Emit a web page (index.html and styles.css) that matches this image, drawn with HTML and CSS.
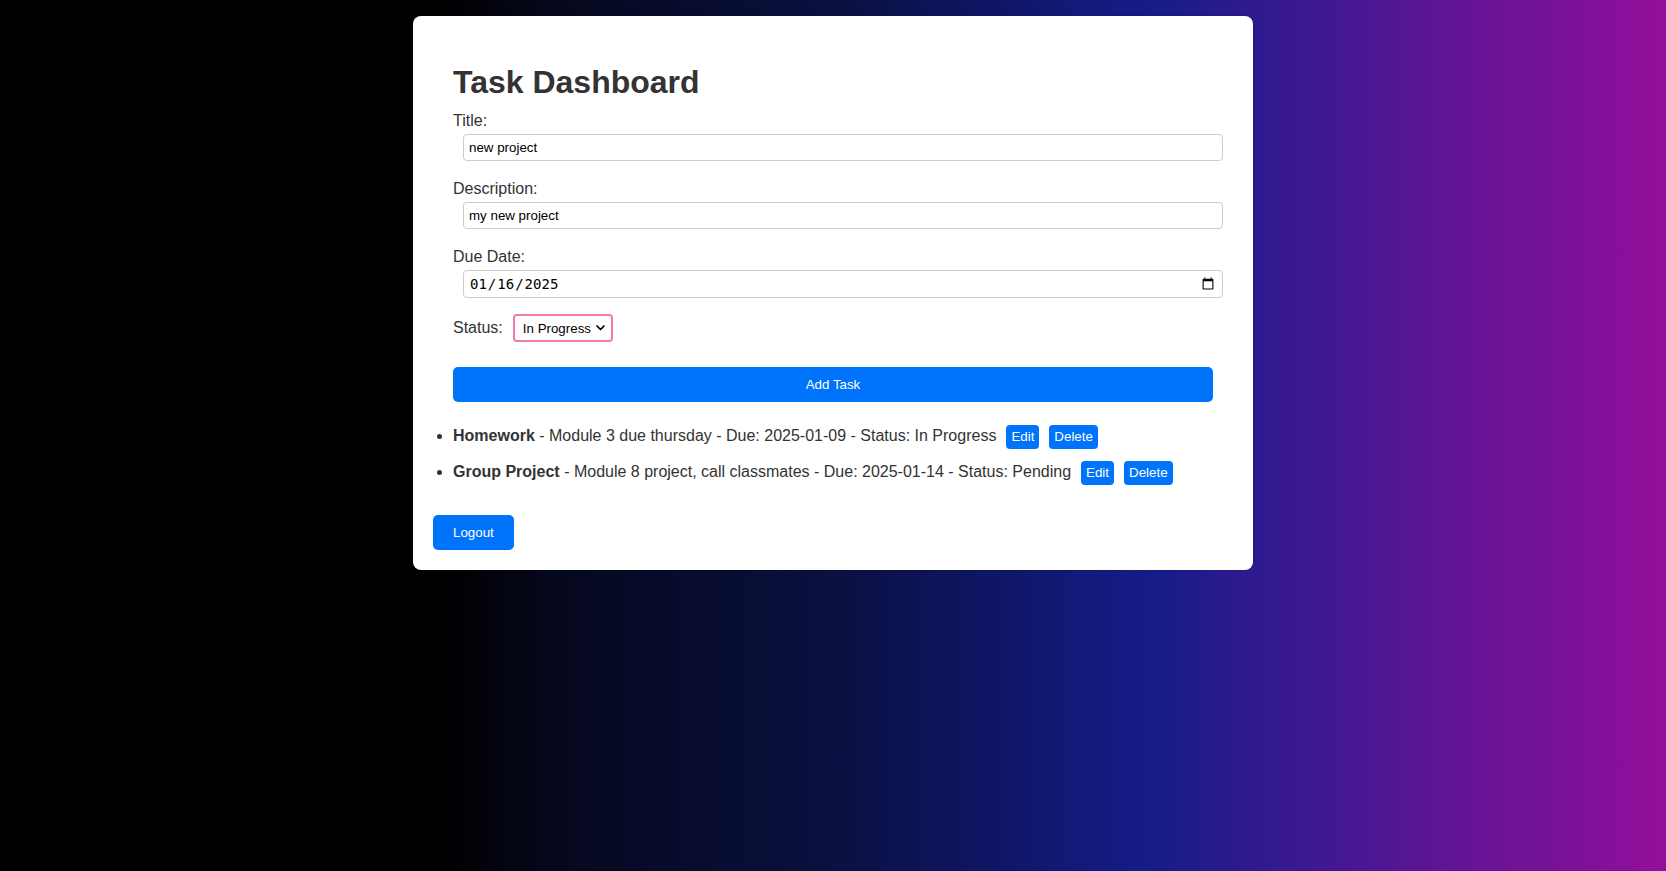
FILE: index.html
```html
<!DOCTYPE html>
<html lang="en">
<head>
<meta charset="utf-8">
<title>Task Dashboard</title>
<link rel="stylesheet" href="styles.css">
</head>
<body>
<div class="card">
  <form class="task-form">
    <h1 class="title">Task Dashboard</h1>
    <div class="field">
      <label class="label" for="t">Title:</label>
      <input class="input" id="t" type="text" value="new project">
    </div>
    <div class="field">
      <label class="label" for="d">Description:</label>
      <input class="input" id="d" type="text" value="my new project">
    </div>
    <div class="field">
      <label class="label" for="due">Due Date:</label>
      <input class="input input-date" id="due" type="date" value="2025-01-16">
    </div>
    <div class="status-row">
      <label class="label" for="s">Status:</label>
      <span class="select-wrap">
        <select class="select" id="s">
          <option>Pending</option>
          <option selected>In Progress</option>
          <option>Completed</option>
        </select>
        <svg class="chevron" width="9" height="6" viewBox="0 0 9 6"><path d="M1 1 L4.5 4.5 L8 1" fill="none" stroke="#000" stroke-width="1.7" stroke-linecap="round" stroke-linejoin="round"/></svg>
      </span>
    </div>
    <button class="btn btn-add" type="button">Add Task</button>
  </form>
  <ul class="task-list">
    <li class="task"><span><strong>Homework</strong> - Module 3 due thursday - Due: 2025-01-09 - Status: In Progress</span><button class="btn-sm" type="button">Edit</button><button class="btn-sm" type="button">Delete</button></li>
    <li class="task"><span><strong>Group Project</strong> - Module 8 project, call classmates - Due: 2025-01-14 - Status: Pending</span><button class="btn-sm" type="button">Edit</button><button class="btn-sm" type="button">Delete</button></li>
  </ul>
  <button class="btn btn-logout" type="button">Logout</button>
</div>
</body>
</html>
```

FILE: styles.css
```css
html, body {
  margin: 0;
  padding: 0;
}
body {
  min-height: 100vh;
  font-family: "Liberation Sans", Arial, sans-serif;
  color: #333;
  background: linear-gradient(90deg, #000 26.6%, #05081c 33%, #0a1040 50%, #10176a 61%, #151c88 69%, #2e1a8f 75%, #5c1594 86%, #920f9b 100%);
}
.card {
  box-sizing: border-box;
  width: 840px;
  margin: 16px auto 0;
  padding: 20px;
  background: #fff;
  border-radius: 8px;
  box-shadow: 0 0 2px rgba(0,0,0,0.3);
}
.task-form {
  padding: 20px;
}
.title {
  margin: 8px 0 11px;
  font-size: 32px;
  line-height: 37px;
  font-weight: bold;
  color: #333;
}
.field {
  margin-bottom: 19px;
}
.label {
  display: block;
  font-size: 16px;
  line-height: 18px;
  color: #333;
}
.input {
  display: block;
  box-sizing: border-box;
  width: 100%;
  height: 27px;
  margin: 4px 0 0 10px;
  padding: 5px;
  border: 1px solid #ccc;
  border-radius: 4px;
  font-family: "Liberation Sans", Arial, sans-serif;
  font-size: 13.33px;
  line-height: 15px;
  color: #000;
  background: #fff;
}
.input-date {
  height: 28px;
  font-family: "DejaVu Sans Mono", "Liberation Mono", monospace;
  font-size: 14px;
  line-height: 16px;
}
.status-row {
  display: flex;
  align-items: center;
  gap: 10px;
  margin-top: -3px;
}
.select-wrap {
  position: relative;
  display: inline-block;
}
.select {
  -webkit-appearance: none;
  appearance: none;
  box-sizing: border-box;
  width: 100px;
  height: 28px;
  padding: 0 0 0 8px;
  border: 2px solid #f07aa8;
  border-radius: 4px;
  background: #fff;
  font-family: "Liberation Sans", Arial, sans-serif;
  font-size: 13.33px;
  color: #000;
}
.chevron {
  position: absolute;
  right: 8px;
  top: 11px;
  pointer-events: none;
}
.btn {
  display: block;
  border: 0;
  color: #fff;
  background: #0073fb;
  font-family: "Liberation Sans", Arial, sans-serif;
  font-size: 13.33px;
  line-height: 15px;
  border-radius: 5px;
  cursor: pointer;
}
.btn-add {
  width: 100%;
  margin-top: 25px;
  padding: 10px;
}
.task-list {
  margin: 2px 0 0;
  padding: 0 0 0 20px;
}
.task {
  margin: 0 0 11px;
  font-size: 16px;
  line-height: 24px;
  color: #333;
}
.task strong {
  font-weight: bold;
}
.btn-sm {
  display: inline-block;
  margin-left: 10px;
  padding: 4px 5px;
  border: 0;
  border-radius: 4px;
  color: #fff;
  background: #0073fb;
  font-family: "Liberation Sans", Arial, sans-serif;
  font-size: 13.33px;
  line-height: 16px;
  vertical-align: baseline;
  cursor: pointer;
}
.btn-logout {
  margin-top: 30px;
  padding: 10px 20px;
}
```
